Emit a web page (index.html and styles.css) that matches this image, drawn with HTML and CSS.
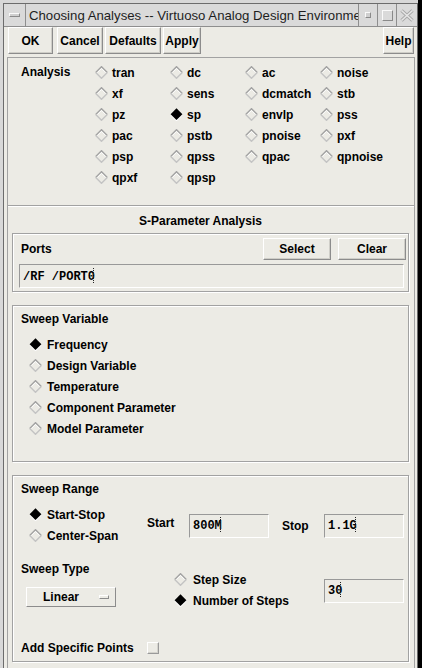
FILE: index.html
```html
<!DOCTYPE html>
<html>
<head>
<meta charset="utf-8">
<link rel="stylesheet" href="styles.css">
</head>
<body>
<svg class="defs" width="0" height="0" aria-hidden="true">
  <symbol id="rd-off" viewBox="0 0 13 13">
    <path d="M0.7 6.5 L6.5 0.7 L12.3 6.5" fill="none" stroke="#a2a2a2" stroke-width="1.4"/>
    <path d="M0.7 6.5 L6.5 12.3 L12.3 6.5" fill="none" stroke="#c4c4c4" stroke-width="1.4"/>
    <path d="M2.4 6.5 L6.5 2.4 L10.6 6.5" fill="none" stroke="#ffffff" stroke-width="0.9"/>
  </symbol>
  <symbol id="rd-on" viewBox="0 0 13 13">
    <path d="M1 7 L6.5 12.5 L12 7" fill="none" stroke="#ffffff" stroke-width="1.3"/>
    <polygon points="6.5,0.2 12.4,6.2 6.5,12 0.6,6.2" fill="#000"/>
  </symbol>
</svg>
<div class="window">
  <div class="inner">
    <div class="titlebar">
      <div class="tb-cell tb-menu"><span class="menu-bar"></span></div>
      <div class="tb-cell tb-title">Choosing Analyses -- Virtuoso Analog Design Environment</div>
      <div class="tb-cell tb-btn"><span class="ico-min"></span></div>
      <div class="tb-cell tb-btn"><span class="ico-max"></span></div>
      <div class="tb-cell tb-btn tb-close">
        <svg width="14" height="13" viewBox="0 0 14 13">
          <path d="M1.5 1.5 L12.5 11.5 M12.5 1.5 L1.5 11.5" stroke="#a8a8a8" stroke-width="3.4" fill="none"/>
          <path d="M1.5 1.5 L12.5 11.5 M12.5 1.5 L1.5 11.5" stroke="#e6e6e6" stroke-width="1.6" fill="none"/>
        </svg>
      </div>
    </div>
    <div class="content">
      <div class="btnbar">
        <button class="btn b-ok">OK</button>
        <button class="btn b-cancel">Cancel</button>
        <button class="btn b-defaults">Defaults</button>
        <button class="btn b-apply">Apply</button>
        <button class="btn b-help">Help</button>
      </div>
      <div class="panel">
        <div class="analysis">
          <div class="alabel">Analysis</div>
          <div class="ai"><svg class="rd"><use href="#rd-off" width="13" height="13"/></svg>tran</div>
          <div class="ai"><svg class="rd"><use href="#rd-off" width="13" height="13"/></svg>dc</div>
          <div class="ai"><svg class="rd"><use href="#rd-off" width="13" height="13"/></svg>ac</div>
          <div class="ai"><svg class="rd"><use href="#rd-off" width="13" height="13"/></svg>noise</div>
          <div class="ai c2"><svg class="rd"><use href="#rd-off" width="13" height="13"/></svg>xf</div>
          <div class="ai"><svg class="rd"><use href="#rd-off" width="13" height="13"/></svg>sens</div>
          <div class="ai"><svg class="rd"><use href="#rd-off" width="13" height="13"/></svg>dcmatch</div>
          <div class="ai"><svg class="rd"><use href="#rd-off" width="13" height="13"/></svg>stb</div>
          <div class="ai c2"><svg class="rd"><use href="#rd-off" width="13" height="13"/></svg>pz</div>
          <div class="ai"><svg class="rd"><use href="#rd-on" width="13" height="13"/></svg>sp</div>
          <div class="ai"><svg class="rd"><use href="#rd-off" width="13" height="13"/></svg>envlp</div>
          <div class="ai"><svg class="rd"><use href="#rd-off" width="13" height="13"/></svg>pss</div>
          <div class="ai c2"><svg class="rd"><use href="#rd-off" width="13" height="13"/></svg>pac</div>
          <div class="ai"><svg class="rd"><use href="#rd-off" width="13" height="13"/></svg>pstb</div>
          <div class="ai"><svg class="rd"><use href="#rd-off" width="13" height="13"/></svg>pnoise</div>
          <div class="ai"><svg class="rd"><use href="#rd-off" width="13" height="13"/></svg>pxf</div>
          <div class="ai c2"><svg class="rd"><use href="#rd-off" width="13" height="13"/></svg>psp</div>
          <div class="ai"><svg class="rd"><use href="#rd-off" width="13" height="13"/></svg>qpss</div>
          <div class="ai"><svg class="rd"><use href="#rd-off" width="13" height="13"/></svg>qpac</div>
          <div class="ai"><svg class="rd"><use href="#rd-off" width="13" height="13"/></svg>qpnoise</div>
          <div class="ai c2"><svg class="rd"><use href="#rd-off" width="13" height="13"/></svg>qpxf</div>
          <div class="ai"><svg class="rd"><use href="#rd-off" width="13" height="13"/></svg>qpsp</div>
        </div>
        <div class="sep"></div>
        <div class="sp-title">S-Parameter Analysis</div>

        <div class="frame ports">
          <div class="ports-head">
            <span class="plabel">Ports</span>
            <button class="btn b-select">Select</button>
            <button class="btn b-clear">Clear</button>
          </div>
          <div class="field ports-field">/RF /PORT0<span class="caret"></span></div>
        </div>

        <div class="frame sweepvar">
          <div class="flabel">Sweep Variable</div>
          <div class="vlist">
            <div class="vi"><svg class="rd"><use href="#rd-on" width="13" height="13"/></svg>Frequency</div>
            <div class="vi"><svg class="rd"><use href="#rd-off" width="13" height="13"/></svg>Design Variable</div>
            <div class="vi"><svg class="rd"><use href="#rd-off" width="13" height="13"/></svg>Temperature</div>
            <div class="vi"><svg class="rd"><use href="#rd-off" width="13" height="13"/></svg>Component Parameter</div>
            <div class="vi"><svg class="rd"><use href="#rd-off" width="13" height="13"/></svg>Model Parameter</div>
          </div>
        </div>

        <div class="frame range">
          <div class="flabel">Sweep Range</div>
          <div class="range-row">
            <div class="range-radios">
              <div class="vi"><svg class="rd"><use href="#rd-on" width="13" height="13"/></svg>Start-Stop</div>
              <div class="vi"><svg class="rd"><use href="#rd-off" width="13" height="13"/></svg>Center-Span</div>
            </div>
            <div class="lbl start-lbl">Start</div>
            <div class="field w80">800M<span class="caret"></span></div>
            <div class="lbl stop-lbl">Stop</div>
            <div class="field w80">1.1G<span class="caret"></span></div>
          </div>
          <div class="type-row">
            <div class="type-left">
              <div class="tlabel">Sweep Type</div>
              <div class="menubtn">Linear<span class="ind"></span></div>
            </div>
            <div class="type-radios">
              <div class="ti"><svg class="rd"><use href="#rd-off" width="13" height="13"/></svg>Step Size</div>
              <div class="ti"><svg class="rd"><use href="#rd-on" width="13" height="13"/></svg>Number of Steps</div>
            </div>
            <div class="field w80 steps">30<span class="caret"></span></div>
          </div>
          <div class="add-row"><span class="add-lbl">Add Specific Points</span><span class="check"></span></div>
        </div>
      </div>
    </div>
  </div>
</div>
</body>
</html>
```

FILE: styles.css
```css
* { box-sizing: border-box; }
html, body { margin: 0; padding: 0; }
body {
  width: 422px;
  height: 668px;
  overflow: hidden;
  background: #d8d8d8;
  font-family: "Liberation Sans", Arial, sans-serif;
  color: #000;
}
.defs { position: absolute; width: 0; height: 0; }

.window {
  width: 422px;
  height: 668px;
  padding: 3px 0 0 3px;
  background: #d8d8d8;
  border-right: 4px solid #000;
  display: flex;
  flex-direction: column;
}
.inner {
  flex: 1;
  min-height: 0;
  display: flex;
  flex-direction: column;
  border-left: 1px solid #6c6c6c;
  border-top: 1px solid #6c6c6c;
  border-right: 1px solid #6a6a6a;
}

/* title bar */
.titlebar {
  height: 23px;
  display: flex;
  background: #dadada;
  border-bottom: 1px solid #8e8e8e;
}
.tb-cell {
  height: 22px;
  border-right: 1px solid #8e8e8e;
  display: flex;
  align-items: center;
  justify-content: center;
}
.tb-menu { width: 22px; }
.menu-bar {
  width: 11px;
  height: 4px;
  border-top: 1px solid #fafafa;
  border-left: 1px solid #fafafa;
  border-bottom: 1px solid #8a8a8a;
  border-right: 1px solid #8a8a8a;
  background: #cfcfcf;
}
.tb-title {
  width: 333px;
  justify-content: flex-start;
  padding-left: 3px;
  font-size: 13.2px;
  color: #1e1e1e;
  white-space: nowrap;
  overflow: hidden;
}
.tb-btn { width: 19px; }
.tb-close { flex: 1; border-right: none; }
.ico-min {
  width: 6px;
  height: 6px;
  border: 1px solid;
  border-color: #fafafa #8a8a8a #8a8a8a #fafafa;
  background: #cfcfcf;
}
.ico-max {
  width: 11px;
  height: 11px;
  border: 1px solid;
  border-color: #fafafa #8a8a8a #8a8a8a #fafafa;
}

/* content */
.content {
  flex: 1;
  min-height: 0;
  display: flex;
  flex-direction: column;
  background: #ecebe5;
}
.btnbar {
  height: 30px;
  flex: none;
  display: flex;
  align-items: flex-start;
  padding-left: 4px;
}
.btn {
  height: 27px;
  padding: 0;
  margin: 0;
  border: 1px solid;
  border-color: #ffffff #8c8c8c #8c8c8c #ffffff;
  box-shadow: inset -1px -1px 0 #cfcec8;
  background: #ecebe5;
  font: bold 12px "Liberation Sans", Arial, sans-serif;
  color: #000;
  text-align: center;
}
.b-ok { width: 45px; }
.b-cancel { width: 46px; margin-left: 4px; }
.b-defaults { width: 56px; margin-left: 2px; }
.b-apply { width: 38px; margin-left: 2px; }
.b-help { width: 31px; margin-left: auto; margin-right: 3px; }

.panel {
  flex: 1;
  min-height: 0;
  margin: 0 2px 0 3px;
  border: 1px solid #a2a2a2;
  border-bottom: none;
  display: flex;
  flex-direction: column;
  overflow: hidden;
}

.analysis {
  height: 147px;
  flex: none;
  padding: 4px 0 0 13px;
  display: grid;
  grid-template-columns: 74px 75px 75px 75px 75px;
  grid-auto-rows: 21px;
  font-size: 12px;
  font-weight: bold;
}
.alabel { line-height: 21px; }
.ai {
  display: flex;
  align-items: center;
  gap: 4px;
  white-space: nowrap;
}
.ai.c2 { grid-column: 2; }
.rd { width: 13px; height: 13px; flex: none; }

.sep {
  height: 2px;
  flex: none;
  border-top: 1px solid #a2a2a2;
  border-bottom: 1px solid #ffffff;
}
.sp-title {
  height: 26px;
  flex: none;
  line-height: 28px;
  text-align: center;
  padding-right: 21px;
  font-size: 12px;
  font-weight: bold;
}

.frame {
  flex: none;
  margin: 0 5px 0 4px;
  border: 1px solid #a2a2a2;
  box-shadow: inset 1px 1px 0 #ffffff, 1px 1px 0 #ffffff;
  font-size: 12px;
  font-weight: bold;
}

/* ports */
.ports { padding: 4px 0 3px 0; }
.ports-head {
  height: 22px;
  display: flex;
  align-items: center;
}
.plabel { margin-left: 8px; margin-right: auto; }
.b-select { width: 68px; height: 22px; }
.b-clear { width: 68px; height: 22px; margin-left: 7px; margin-right: 2px; }
.field {
  height: 24px;
  border: 1px solid;
  border-color: #999999 #ffffff #ffffff #999999;
  background: #ecebe5;
  font: bold 12px "Liberation Mono", "Courier New", monospace;
  padding: 2px 0 0 3px;
  line-height: 17px;
  white-space: nowrap;
}
.ports-field {
  margin: 4px 4px 0 6px;
  padding-top: 3px;
}
.caret {
  display: inline-block;
  width: 1px;
  height: 16px;
  margin-left: -2px;
  vertical-align: -4px;
  background: repeating-linear-gradient(#222 0 1px, transparent 1px 2px);
}

/* sweep variable */
.sweepvar {
  height: 157px;
  margin-top: 13px;
  padding-top: 3px;
}
.flabel {
  height: 21px;
  line-height: 21px;
  padding-left: 8px;
}
.vlist { margin-top: 4px; padding-left: 16px; }
.vi {
  height: 21px;
  display: flex;
  align-items: center;
  gap: 5px;
  white-space: nowrap;
}

/* sweep range */
.range {
  height: 187px;
  margin-top: 13px;
  padding-top: 3px;
  display: flex;
  flex-direction: column;
}
.range-row {
  margin-top: 4px;
  display: flex;
  align-items: flex-start;
}
.range-radios { width: 134px; padding-left: 16px; }
.lbl { margin-top: 10px; height: 24px; width: 42px; }
.start-lbl { line-height: 19px; }
.stop-lbl { line-height: 24px; margin-left: 13px; }
.w80 { width: 80px; margin-top: 10px; }

.type-row {
  margin-top: 13px;
  display: flex;
  align-items: flex-start;
}
.type-left { width: 161px; }
.tlabel { height: 21px; line-height: 21px; padding-left: 8px; }
.menubtn {
  margin: 7px 0 0 13px;
  width: 90px;
  height: 20px;
  border: 1px solid;
  border-color: #ffffff #8c8c8c #8c8c8c #ffffff;
  display: flex;
  align-items: center;
  padding-left: 16px;
}
.ind {
  margin-left: auto;
  margin-right: 6px;
  width: 10px;
  height: 4px;
  border: 1px solid;
  border-color: #ffffff #8c8c8c #8c8c8c #ffffff;
}
.type-radios { width: 150px; margin-top: 10px; }
.ti {
  height: 21px;
  display: flex;
  align-items: center;
  gap: 6px;
  white-space: nowrap;
}
.steps { margin-top: 20px; }

.add-row {
  margin-top: auto;
  margin-bottom: 3px;
  height: 21px;
  display: flex;
  align-items: center;
}
.add-lbl { width: 134px; padding-left: 8px; white-space: nowrap; }
.check {
  width: 12px;
  height: 12px;
  border: 1px solid;
  border-color: #ffffff #9a9a9a #9a9a9a #ffffff;
  box-shadow: inset -1px -1px 0 #d4d3cd;
}
```
